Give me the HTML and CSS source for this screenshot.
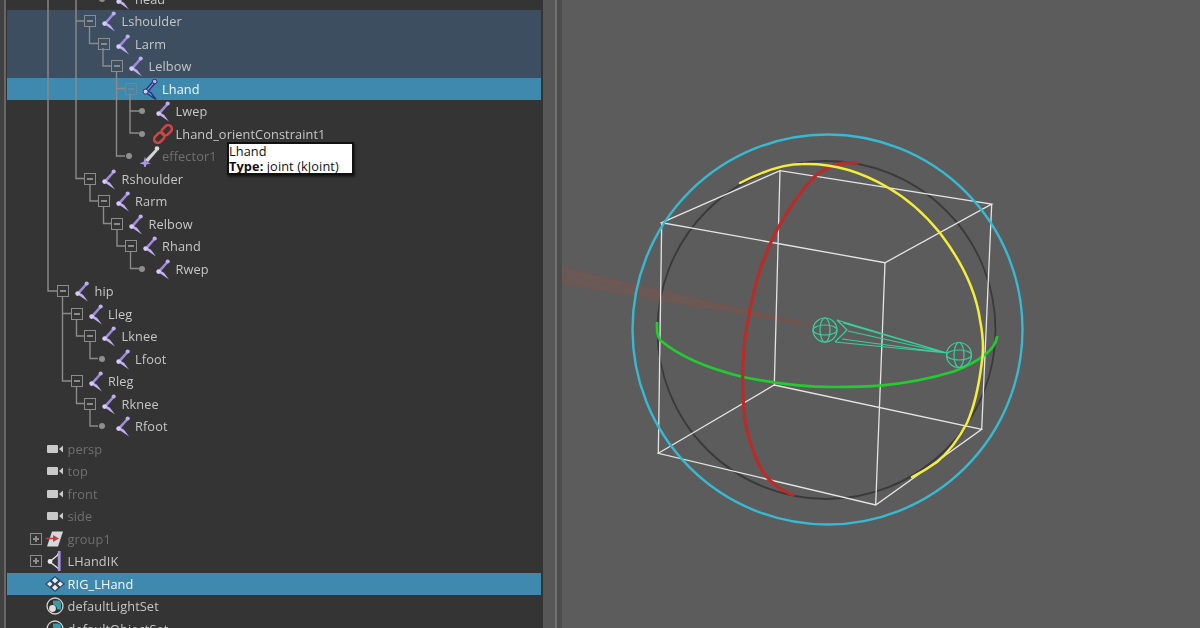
FILE: index.html
```html
<!DOCTYPE html>
<html lang="en">
<head>
<meta charset="utf-8">
<title>Outliner</title>
<link rel="stylesheet" href="styles.css">
</head>
<body>
<svg class="defs" width="0" height="0" aria-hidden="true">
  <symbol id="joint" viewBox="0 0 16 22">
    <path d="M2.800 12.800 11.800 3 13.600 4.600 4.800 14.800Z" fill="#9f89da"/>
    <path d="M3 14 14 21.500 9 14.800 5 12.500Z" fill="#bfaef1"/>
    <circle cx="12.700" cy="3.500" r="2.100" fill="#bdaeef"/>
    <circle cx="3.600" cy="13.600" r="2.300" fill="#d6cbf8"/>
  </symbol>
  <symbol id="joint-sel" viewBox="0 0 16 22">
    <path d="M2.800 12.800 11.800 3 13.600 4.600 4.800 14.800ZM3 14 14 21.500 9 14.800 5 12.500Z" fill="#9f89da" stroke="#1d3a78" stroke-width="1.400"/>
    <circle cx="12.700" cy="3.500" r="2.300" fill="#bdaeef" stroke="#1d3a78"/>
    <circle cx="3.600" cy="13.600" r="2.500" fill="#d6cbf8" stroke="#1d3a78"/>
  </symbol>
  <symbol id="effector" viewBox="0 0 20 22">
    <path d="M5 15 15.500 4 17.500 6 8 17Z" fill="#d4d4d4"/>
    <circle cx="17" cy="3.500" r="2.300" fill="#dcdcdc"/>
    <path d="M5 11.500 6.400 16.800 11 18.200 6.400 19.600 5 24 3.600 19.600-1 18.200 3.600 16.800Z" fill="#ab97e4"/>
  </symbol>
  <symbol id="link" viewBox="0 0 20 20">
    <g fill="none" stroke="#cf4545" stroke-width="2.600" transform="rotate(-45 10 10)">
      <rect x="-1" y="6.300" width="11.500" height="7.400" rx="3.700"/>
      <rect x="9.500" y="6.300" width="11.500" height="7.400" rx="3.700"/>
    </g>
  </symbol>
  <symbol id="camera" viewBox="0 0 16 10">
    <rect x="0" y="1" width="11" height="8" rx="1" fill="#c9c9c9"/>
    <path d="M12 5 16 1.500V8.500Z" fill="#c9c9c9"/>
  </symbol>
  <symbol id="group" viewBox="0 0 18 16">
    <path d="M6 .5H17L12 15.500H1Z" fill="#d8d8d8"/>
    <path d="M-1 7.500H8" stroke="#c04040" stroke-width="1.600"/>
    <path d="M7 4 13 7.500 7 11Z" fill="#c04040"/>
  </symbol>
  <symbol id="ik" viewBox="0 0 16 22">
    <path d="M3 11.500 12 4M3 12 12 19" stroke="#e4e4e4" stroke-width="1.500"/>
    <circle cx="3" cy="11.500" r="2.400" fill="#e8e8e8"/>
    <circle cx="11.500" cy="4.500" r="1.500" fill="#e8e8e8"/>
    <rect x="10.800" y="1" width="2.800" height="20" fill="#a994e0"/>
  </symbol>
  <symbol id="rig" viewBox="0 0 20 16">
    <path d="M10 0 20 8 10 16 0 8Z" fill="#2d4c63"/>
    <path d="M10 1.500 13 4.500 10 7.200 7 4.500ZM4.800 5.500 7.500 8 4.800 10.500 2 8ZM15.200 5.500 18 8 15.200 10.500 12.500 8ZM10 8.800 13 11.500 10 14.500 7 11.500Z" fill="#ececec"/>
  </symbol>
  <symbol id="set" viewBox="0 0 18 18">
    <circle cx="9" cy="9" r="8" fill="#2f2f2f" stroke="#d2d2d2" stroke-width="1.300"/>
    <path d="M7 3.500H12.500A3 3 0 0 1 15 6.500V12.500H11A5 5 0 0 0 7 7.500Z" fill="#3b9aa5"/>
    <circle cx="6.500" cy="11.500" r="3.400" fill="#dedede"/>
  </symbol>
</svg>

<div class="app">
  <div class="edge"></div>
  <section class="outliner">
    <ul class="tree">
      <li class="row d5"><span class="slot"><i class="dot"></i></span><span class="ico"><svg class="j"><use href="#joint"/></svg></span><span class="name">head</span></li>
      <li class="row d4 parent-sel"><span class="slot"><i class="box"></i></span><span class="ico"><svg class="j"><use href="#joint"/></svg></span><span class="name">Lshoulder</span></li>
      <li class="row d5 parent-sel"><span class="slot"><i class="box"></i></span><span class="ico"><svg class="j"><use href="#joint"/></svg></span><span class="name">Larm</span></li>
      <li class="row d6 parent-sel"><span class="slot"><i class="box"></i></span><span class="ico"><svg class="j"><use href="#joint"/></svg></span><span class="name">Lelbow</span></li>
      <li class="row d7 sel"><span class="slot"><i class="box"></i></span><span class="ico"><svg class="j"><use href="#joint-sel"/></svg></span><span class="name bright">Lhand</span></li>
      <li class="row d8"><span class="slot"><i class="dot"></i></span><span class="ico"><svg class="j"><use href="#joint"/></svg></span><span class="name">Lwep</span></li>
      <li class="row d8"><span class="slot"><i class="dot"></i></span><span class="ico"><svg class="lnk"><use href="#link"/></svg></span><span class="name">Lhand_orientConstraint1</span></li>
      <li class="row d7"><span class="slot"><i class="dot"></i></span><span class="ico"><svg class="eff"><use href="#effector"/></svg></span><span class="name dim">effector1</span></li>
      <li class="row d4"><span class="slot"><i class="box"></i></span><span class="ico"><svg class="j"><use href="#joint"/></svg></span><span class="name">Rshoulder</span></li>
      <li class="row d5"><span class="slot"><i class="box"></i></span><span class="ico"><svg class="j"><use href="#joint"/></svg></span><span class="name">Rarm</span></li>
      <li class="row d6"><span class="slot"><i class="box"></i></span><span class="ico"><svg class="j"><use href="#joint"/></svg></span><span class="name">Relbow</span></li>
      <li class="row d7"><span class="slot"><i class="box"></i></span><span class="ico"><svg class="j"><use href="#joint"/></svg></span><span class="name">Rhand</span></li>
      <li class="row d8"><span class="slot"><i class="dot"></i></span><span class="ico"><svg class="j"><use href="#joint"/></svg></span><span class="name">Rwep</span></li>
      <li class="row d2"><span class="slot"><i class="box"></i></span><span class="ico"><svg class="j"><use href="#joint"/></svg></span><span class="name">hip</span></li>
      <li class="row d3"><span class="slot"><i class="box"></i></span><span class="ico"><svg class="j"><use href="#joint"/></svg></span><span class="name">Lleg</span></li>
      <li class="row d4"><span class="slot"><i class="box"></i></span><span class="ico"><svg class="j"><use href="#joint"/></svg></span><span class="name">Lknee</span></li>
      <li class="row d5"><span class="slot"><i class="dot"></i></span><span class="ico"><svg class="j"><use href="#joint"/></svg></span><span class="name">Lfoot</span></li>
      <li class="row d3"><span class="slot"><i class="box"></i></span><span class="ico"><svg class="j"><use href="#joint"/></svg></span><span class="name">Rleg</span></li>
      <li class="row d4"><span class="slot"><i class="box"></i></span><span class="ico"><svg class="j"><use href="#joint"/></svg></span><span class="name">Rknee</span></li>
      <li class="row d5"><span class="slot"><i class="dot"></i></span><span class="ico"><svg class="j"><use href="#joint"/></svg></span><span class="name">Rfoot</span></li>
      <li class="row d0"><span class="slot"></span><span class="ico"><svg class="cam"><use href="#camera"/></svg></span><span class="name dim">persp</span></li>
      <li class="row d0"><span class="slot"></span><span class="ico"><svg class="cam"><use href="#camera"/></svg></span><span class="name dim">top</span></li>
      <li class="row d0"><span class="slot"></span><span class="ico"><svg class="cam"><use href="#camera"/></svg></span><span class="name dim">front</span></li>
      <li class="row d0"><span class="slot"></span><span class="ico"><svg class="cam"><use href="#camera"/></svg></span><span class="name dim">side</span></li>
      <li class="row d0"><span class="slot"><i class="box plus"></i></span><span class="ico"><svg class="grp"><use href="#group"/></svg></span><span class="name dim">group1</span></li>
      <li class="row d0"><span class="slot"><i class="box plus"></i></span><span class="ico"><svg class="j"><use href="#ik"/></svg></span><span class="name">LHandIK</span></li>
      <li class="row d0 sel"><span class="slot"></span><span class="ico"><svg class="rg"><use href="#rig"/></svg></span><span class="name bright">RIG_LHand</span></li>
      <li class="row d0"><span class="slot"></span><span class="ico"><svg class="st"><use href="#set"/></svg></span><span class="name">defaultLightSet</span></li>
      <li class="row d0"><span class="slot"></span><span class="ico"><svg class="st"><use href="#set"/></svg></span><span class="name">defaultObjectSet</span></li>
    </ul>
    <svg class="wires" viewBox="7 0 536 628" aria-hidden="true">
      <path d="M48 0V291H57M76 0V178.500H85M76 21H85M89.500 26V43.500H98M103 48V66H112M116.500 71V156H125M116.500 88.500H125M130 94V133H139M130 111H139M90 184V201H98M103.500 206V223.500H112M117 229V246H125M130.500 251V268.500H139M62.500 296V381H71M62.500 313.500H71M76.500 319V336H85M90 341V358.500H98M76.500 386V403.500H85M90 409V426H98"/>
    </svg>
    <div class="tip"><div class="tip-line">Lhand</div><div class="tip-line"><b>Type:</b> joint (kJoint)</div></div>
  </section>
  <div class="split"><div class="split-a"></div><div class="split-b"></div><div class="split-c"></div></div>
  <main class="view">
    <svg class="scene" viewBox="562 0 638 628" aria-hidden="true">
      <g class="beam">
        <path d="M562 267 810 324V326L562 284Z"/>
        <path class="beam-l" d="M562 268 810 325M562 275 810 325M562 283 810 325"/>
      </g>
      <circle class="ring-dark" cx="826.500" cy="330" r="169"/>
      <path class="cube" d="M661.700 222.700 780 170.700 991.700 204 885 262.700ZM658.300 453.300 774.300 385 981.700 429.300 875.700 505ZM661.700 222.700 658.300 453.300M780 170.700 774.300 385M991.700 204 981.700 429.300M885 262.700 875.700 505"/>
      <circle class="ring-cyan" cx="827.500" cy="329.500" r="195"/>
      <path class="arc green" d="M657 323C657 331 657 336 660 340 680 357 710 369 743 377 772 383 803 387 833 387 850 387 865 387 880 385.700 908 383 932 378 953 371.700 968 366 979 360 987 353 993 348 996 343 997 337"/>
      <path class="arc red" d="M857 163C848 162 838 163 830 167 823 170 818 173 813 178 800 192 788 210 778 228 770 242 765 256 760 270 754 288 750 308 746.700 327 744 343 742.700 360 742.700 377 742.700 392 743 406 745 420 748 437 753 453 760 467 768 481 780 490 793 495"/>
      <path class="arc yellow" d="M740 183C765 170 785 164 803 164 835 163 865 174 887 187 910 200 927 217 940 233 962 262 976 292 980 320 983 335 984 350 981.700 363 979 385 975 405 967 423 958 440 949 452 937 462 930 467 922 472 912 477"/>
      <g class="wire">
        <path d="M837 320 947 353 835 342M843 323 947 353 842 339M848 331 947 353M837 320 847 330 835 342"/>
        <circle cx="825" cy="330" r="12"/>
        <ellipse cx="825" cy="330" rx="5" ry="12"/>
        <ellipse cx="825" cy="330" rx="12" ry="5"/>
        <circle cx="959" cy="355" r="12.500"/>
        <ellipse cx="959" cy="355" rx="5" ry="12.500"/>
        <ellipse cx="959" cy="355" rx="12.500" ry="5"/>
      </g>
    </svg>
  </main>
</div>
</body>
</html>
```

FILE: styles.css
```css
* { box-sizing: border-box; }
html, body { margin: 0; height: 100%; overflow: hidden; background: #5c5c5c; }
.defs { position: absolute; }

.app { display: flex; width: 1200px; height: 628px; }
.edge { width: 7px; background: linear-gradient(90deg, #414141 0 4px, #686868 4px 6px, #333 6px); flex: none; }

.outliner { position: relative; width: 536px; height: 628px; flex: none; background: #343434; overflow: hidden; padding-right: 2px; }
.tree { list-style: none; margin: -12.5px 0 0; padding: 0; filter: blur(.35px); }

.row { display: flex; align-items: center; height: 22.5px; font: 12.75px "Open Sans", sans-serif; letter-spacing: .1px; color: #c6c6c6; white-space: nowrap; }
.d0 { padding-left: 19.5px; }
.d2 { padding-left: 46.5px; }
.d3 { padding-left: 60px; }
.d4 { padding-left: 73.5px; }
.d5 { padding-left: 87px; }
.d6 { padding-left: 100.5px; }
.d7 { padding-left: 114px; }
.d8 { padding-left: 127.5px; }
.parent-sel { background: #3c4e60; }
.sel { background: #3f88ae; }

.slot { width: 19px; height: 22.5px; flex: none; display: flex; align-items: center; justify-content: center; }
.box { display: block; position: relative; width: 12px; height: 12px; border: 1px solid #8b8b8b; }
.box::before { content: ""; position: absolute; left: 2px; right: 2px; top: 4px; height: 2px; background: #8b8b8b; }
.plus::after { content: ""; position: absolute; top: 2px; bottom: 2px; left: 4px; width: 2px; background: #8b8b8b; }
.sel .box { opacity: .55; }
.dot { display: block; width: 6px; height: 6px; border-radius: 50%; background: #8f8f8f; margin-right: 4px; }

.ico { width: 19px; height: 22.5px; flex: none; display: flex; align-items: center; justify-content: center; }
.ico svg { flex: none; overflow: visible; }
.j { width: 16px; height: 22px; }
.lnk { width: 20px; height: 20px; }
.eff { width: 20px; height: 22px; }
.cam { width: 16px; height: 10px; }
.grp { width: 18px; height: 16px; }
.rg { width: 20px; height: 16px; }
.st { width: 18px; height: 18px; }

.name { margin-left: 3px; }
.bright { color: #f2f8fc; }
.dim { color: #707070; }

.wires { position: absolute; left: 0; top: 0; width: 536px; height: 628px; pointer-events: none; fill: none; stroke: #8b8b8b; stroke-width: 1.4; filter: blur(.3px); }

.tip { position: absolute; left: 220px; top: 142px; width: 127px; height: 33px; display: flex; flex-direction: column; justify-content: center; padding-left: 0; background: #fff; border: 2px solid #111; box-shadow: 1px 2px 2px rgba(0, 0, 0, .5); font: 12.75px/15px "Open Sans", sans-serif; letter-spacing: .1px; color: #111; white-space: nowrap; }
.tip-line { height: 14.5px; line-height: 14.5px; }
.tip b { font-weight: 700; }

.split { display: flex; width: 19px; flex: none; }
.split-a { width: 12px; background: #575757; }
.split-b { width: 2px; background: #727272; }
.split-c { width: 5px; background: #4c4c4c; }

.view { flex: 1; background: #5c5c5c; overflow: hidden; }
.scene { display: block; width: 638px; height: 628px; fill: none; filter: blur(.3px); }
.beam path { fill: #735a52; opacity: .55; }
.beam .beam-l { fill: none; stroke: #8a4c3e; stroke-width: 1; opacity: .45; }
.ring-dark { stroke: #3a3a3a; stroke-width: 1.800; }
.cube { stroke: #e4e4e4; stroke-width: 1.300; }
.ring-cyan { stroke: #37b9d2; stroke-width: 2.400; }
.arc { stroke-width: 2.500; stroke-linecap: round; }
.green { stroke: #22cc30; stroke-width: 2.700; }
.red { stroke: #bb2b28; stroke-width: 3.200; }
.yellow { stroke: #f2ee3a; }
.wire { stroke: #38cf9c; stroke-width: 1.200; }
```
